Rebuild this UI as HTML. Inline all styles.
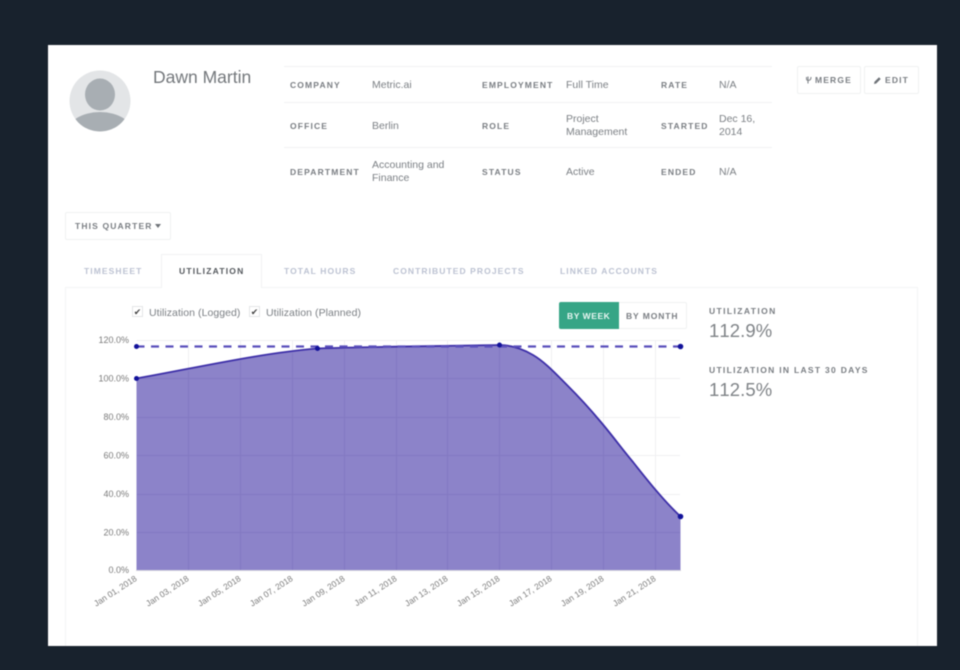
<!DOCTYPE html>
<html><head><meta charset="utf-8"><style>
html,body{margin:0;padding:0;width:960px;height:670px;overflow:hidden;background:#18222d}
body{font-family:"Liberation Sans",sans-serif;position:relative}
#wrap{position:absolute;left:0;top:0;width:960px;height:670px;filter:blur(.6px)}
#card{position:absolute;left:48px;top:45px;width:889px;height:601px;background:#fff}
.a{position:absolute;white-space:nowrap;line-height:13px}
.l{font-size:8.5px;font-weight:bold;letter-spacing:1.15px;color:#7a7e83;line-height:12px}
.v{font-size:10.5px;color:#7c8085}
.t{font-size:8.5px;font-weight:bold;letter-spacing:1.08px;color:#bcc2d2;line-height:12px}
.h{position:absolute;height:1px;background:#f1f2f3}
.btn{position:absolute;background:#fff;border:1px solid #f0f1f2;box-sizing:border-box;border-radius:2px}
.cb{position:absolute;width:11px;height:11px;border:1px solid #e4e5e7;box-sizing:border-box;font-size:9px;line-height:10px;text-align:center;color:#444}
.n{font-size:18.5px;line-height:21px;color:#7f8387;font-kerning:none;letter-spacing:.1px}
</style></head><body><div id="wrap">
<div id="card"></div>

<svg class="a" style="left:69px;top:70px" width="62" height="62" viewBox="0 0 62 62">
<defs><clipPath id="c"><circle cx="31" cy="31" r="30.5"/></clipPath></defs>
<circle cx="31" cy="31" r="30.5" fill="#e3e5e7"/>
<g clip-path="url(#c)" fill="#a8aeb3"><ellipse cx="31" cy="24.500" rx="15" ry="16"/><ellipse cx="31" cy="63" rx="33" ry="21"/></g>
</svg>
<div class="a" style="left:153px;top:67px;font-size:17.500px;line-height:20px;color:#74787c">Dawn Martin</div>

<div class="h" style="left:284px;top:66px;width:488px"></div>
<div class="h" style="left:284px;top:102px;width:488px"></div>
<div class="h" style="left:284px;top:147px;width:488px"></div>

<div class="a l" style="left:290px;top:79px">COMPANY</div>
<div class="a v" style="left:372px;top:79px">Metric.ai</div>
<div class="a l" style="left:482px;top:79px">EMPLOYMENT</div>
<div class="a v" style="left:566px;top:79px">Full Time</div>
<div class="a l" style="left:661px;top:79px">RATE</div>
<div class="a v" style="left:719px;top:79px">N/A</div>

<div class="a l" style="left:290px;top:120px">OFFICE</div>
<div class="a v" style="left:372px;top:120px">Berlin</div>
<div class="a l" style="left:482px;top:120px">ROLE</div>
<div class="a v" style="left:566px;top:113px">Project<br>Management</div>
<div class="a l" style="left:661px;top:120px">STARTED</div>
<div class="a v" style="left:719px;top:113px">Dec 16,<br>2014</div>

<div class="a l" style="left:290px;top:166px">DEPARTMENT</div>
<div class="a v" style="left:372px;top:159px">Accounting and<br>Finance</div>
<div class="a l" style="left:482px;top:166px">STATUS</div>
<div class="a v" style="left:566px;top:166px">Active</div>
<div class="a l" style="left:661px;top:166px">ENDED</div>
<div class="a v" style="left:719px;top:166px">N/A</div>

<div class="btn" style="left:797px;top:66px;width:64px;height:28px"></div>
<svg class="a" style="left:806px;top:76px" width="7" height="8" viewBox="0 0 7 8"><path d="M2 0.500V7.500M.5 1V3C.5 4 1.500 4.500 2 4.500C3.500 4.500 5 4 5 1" fill="none" stroke="#7a7e83" stroke-width="1"/></svg>
<div class="a l" style="left:815px;top:74px">MERGE</div>
<div class="btn" style="left:864px;top:66px;width:55px;height:28px"></div>
<svg class="a" style="left:873px;top:76px" width="9" height="9" viewBox="0 0 9 9"><path d="M1 8l.5-2.200L6 1.300 7.700 3 3.200 7.500z" fill="#6f7378"/></svg>
<div class="a l" style="left:885px;top:74px">EDIT</div>

<div class="btn" style="left:65px;top:212px;width:106px;height:28px"></div>
<div class="a l" style="left:75px;top:220px">THIS QUARTER</div>
<svg class="a" style="left:155px;top:224px" width="6" height="4"><path d="M0 0h6L3 4z" fill="#6f7378"/></svg>

<div class="a" style="left:65px;top:287px;width:853px;height:359px;border:1px solid #f3f4f5;border-bottom:0;box-sizing:border-box"></div>
<div class="a" style="left:161px;top:254px;width:101px;height:34px;background:#fff;border:1px solid #f1f2f3;border-bottom:0;box-sizing:border-box"></div>
<div class="a t" style="left:84px;top:265px">TIMESHEET</div>
<div class="a t" style="left:179px;top:265px;color:#54585d;letter-spacing:1.2px">UTILIZATION</div>
<div class="a t" style="left:284px;top:265px">TOTAL HOURS</div>
<div class="a t" style="left:393px;top:265px">CONTRIBUTED PROJECTS</div>
<div class="a t" style="left:560px;top:265px">LINKED ACCOUNTS</div>

<div class="cb" style="left:132px;top:306px">&#10004;</div>
<div class="a v" style="left:149px;top:307px;letter-spacing:.05px">Utilization (Logged)</div>
<div class="cb" style="left:249px;top:306px">&#10004;</div>
<div class="a v" style="left:266px;top:307px;letter-spacing:.05px">Utilization (Planned)</div>

<div class="btn" style="left:559px;top:302px;width:128px;height:27px"></div>
<div class="a" style="left:559px;top:302px;width:60px;height:27px;background:#36a586;border-radius:2px 0 0 2px"></div>
<div class="a l" style="left:567px;top:310px;color:#eaf6f2;letter-spacing:.55px">BY WEEK</div>
<div class="a l" style="left:626px;top:310px;letter-spacing:.9px">BY MONTH</div>

<div class="a l" style="left:709px;top:305px;letter-spacing:1.4px">UTILIZATION</div>
<div class="a n" style="left:709px;top:320px">112.9%</div>
<div class="a l" style="left:709px;top:364px;letter-spacing:1.3px">UTILIZATION IN LAST 30 DAYS</div>
<div class="a n" style="left:709px;top:379px">112.5%</div>

<svg class="a" style="left:0;top:0;line-height:0" width="960" height="670" viewBox="0 0 960 670">
<g stroke="#f0f0f2" stroke-width="1" fill="none">
<path d="M136.500 340.500H680M136.500 378.500H680M136.500 417.500H680M136.500 455.500H680M136.500 494.500H680M136.500 532.500H680"/>
<path d="M188.500 340V570M240.500 340V570M292.500 340V570M344.500 340V570M396.500 340V570M447.500 340V570M499.500 340V570M551.500 340V570M603.500 340V570M655.500 340V570"/>
</g>
<path d="M136.500 378.500C200 367 262 353 317 348.500C380 346.500 450 346 499 345C512 345 523 349 533 355C545 362 556 374 567 385C579 397 590 409 600 421C612 435 622 449 633 462C648 481 664 501 680.500 516.500V570H136.500Z" fill="#8c83c9"/>
<g stroke="#8278c2" stroke-width="1" fill="none">
<path d="M188.500 371V570M240.500 361V570M292.500 353V570M344.500 349V570M396.500 348V570M447.500 347V570M499.500 347V570M551.500 371V570M603.500 426V570M655.500 490V570"/>
<path d="M137 378.500H558M137 417.500H596M137 455.500H626M137 494.500H657M137 532.500H680"/>
</g>
<path d="M136 570.500H681" stroke="#d5d5dc" stroke-width="1"/>
<path d="M136.500 378.500C200 367 262 353 317 348.500C380 346.500 450 346 499 345C512 345 523 349 533 355C545 362 556 374 567 385C579 397 590 409 600 421C612 435 622 449 633 462C648 481 664 501 680.500 516.500" fill="none" stroke="#3d2fa8" stroke-width="1.800"/>
<path d="M136.500 346.500H680.500" fill="none" stroke="#5a4fbb" stroke-width="2.200" stroke-dasharray="8 6.500"/>
<g fill="#12129a">
<circle cx="136.500" cy="346.500" r="2.500"/><circle cx="680.500" cy="346.500" r="2.800"/>
<circle cx="136.500" cy="378.500" r="2.500"/><circle cx="317.500" cy="348.500" r="2.500"/>
<circle cx="499.500" cy="345" r="2.500"/><circle cx="680.500" cy="516.500" r="2.800"/>
</g>
<g font-family="'Liberation Sans',sans-serif" font-size="9" fill="#7b7b7b" text-anchor="end">
<text x="129" y="343">120.0%</text><text x="129" y="381.500">100.0%</text><text x="129" y="420">80.0%</text>
<text x="129" y="458.500">60.0%</text><text x="129" y="497">40.0%</text><text x="129" y="535.500">20.0%</text><text x="129" y="573">0.0%</text>
<g font-size="8.500">
<text transform="translate(137.500 580) rotate(-33)">Jan 01, 2018</text>
<text transform="translate(189.500 580) rotate(-33)">Jan 03, 2018</text>
<text transform="translate(241.500 580) rotate(-33)">Jan 05, 2018</text>
<text transform="translate(293.500 580) rotate(-33)">Jan 07, 2018</text>
<text transform="translate(345.500 580) rotate(-33)">Jan 09, 2018</text>
<text transform="translate(397.500 580) rotate(-33)">Jan 11, 2018</text>
<text transform="translate(448.500 580) rotate(-33)">Jan 13, 2018</text>
<text transform="translate(500.500 580) rotate(-33)">Jan 15, 2018</text>
<text transform="translate(552.500 580) rotate(-33)">Jan 17, 2018</text>
<text transform="translate(604.500 580) rotate(-33)">Jan 19, 2018</text>
<text transform="translate(656.500 580) rotate(-33)">Jan 21, 2018</text>
</g></g>
</svg>
</div></body></html>
